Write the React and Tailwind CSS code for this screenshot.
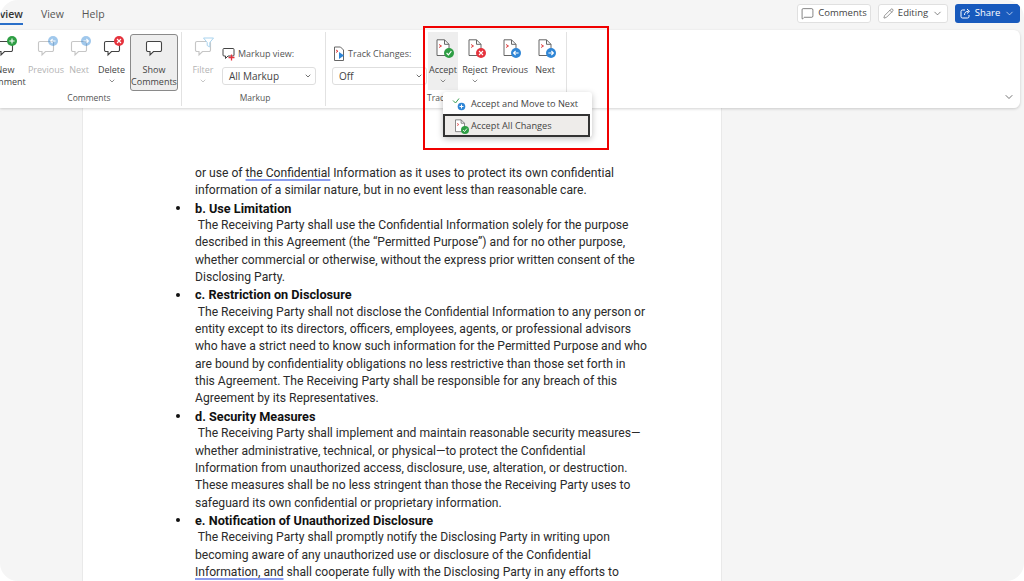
import { ChevronDown, MessageSquare, Pencil } from 'lucide-react';

const BADGES = {
  plus: { bg: 'bg-[#2e9e44]', mark: 'M-2.6 0H2.6M0 -2.6V2.6' },
  cross: { bg: 'bg-[#e5333d]', mark: 'M-2 -2L2 2M2 -2L-2 2' },
  check: { bg: 'bg-[#2e9e44]', mark: 'M-2.4 0L-.6 1.9L2.4 -1.8' },
  left: { bg: 'bg-[#2f86d6]', mark: 'M2.6 0H-2.4M-.4 -2L-2.4 0L-.4 2' },
  right: { bg: 'bg-[#2f86d6]', mark: 'M-2.6 0H2.4M.4 -2L2.4 0L.4 2' },
};

const Badge = ({ type, faded }) => (
  <span className={`absolute -right-[3px] -top-[3px] flex h-[10px] w-[10px] items-center justify-center rounded-full ${BADGES[type].bg} ${faded ? 'opacity-45' : ''}`}>
    <svg width="10" height="10" viewBox="-5 -5 10 10" fill="none">
      <path d={BADGES[type].mark} stroke="#fff" strokeWidth="1.1" />
    </svg>
  </span>
);

const CommentIcon = ({ badge, faded, funnel }) => (
  <span className="relative block h-[18px] w-[18px]">
    <svg width="18" height="18" viewBox="0 0 18 18" fill="none" className={faded ? 'opacity-30' : ''}>
      <path d="M3 2.5h12a1.5 1.5 0 0 1 1.5 1.5v7a1.5 1.5 0 0 1-1.5 1.5H8.5L5 16v-3.5H3A1.5 1.5 0 0 1 1.5 11V4A1.5 1.5 0 0 1 3 2.5Z" stroke="#444" strokeWidth="1.1" fill="#fff" />
    </svg>
    {badge && <Badge type={badge} faded={faded} />}
    {funnel && (
      <svg width="11" height="11" viewBox="0 0 11 11" className="absolute -right-[2px] -top-[2px]">
        <path d="M.5 1h10L6.8 5.5v4.5L4.2 8.5V5.5Z" fill="#fff" stroke="#a9d3ee" strokeWidth="1" />
      </svg>
    )}
  </span>
);

const MarkupIcon = () => (
  <svg width="13" height="14" viewBox="0 0 13 14" fill="none">
    <path d="M2 1.5h9a1 1 0 0 1 1 1v5.5a1 1 0 0 1-1 1H6L3.5 11.5V9H2a1 1 0 0 1-1-1V2.500a1 1 0 0 1 1-1Z" stroke="#444" strokeWidth="1" />
    <path d="M6.500 10.500h6M9.500 7.500v6" stroke="#e5333d" strokeWidth="1.3" />
  </svg>
);

const TrackIcon = () => (
  <svg width="12" height="16" viewBox="0 0 12 16" fill="none">
    <path d="M1.500 1h6L10.500 4v10.500h-9Z" stroke="#666" strokeWidth="1" fill="#fff" />
    <path d="M3 4l2 1.200L3 6.500" stroke="#e0403f" strokeWidth="1" />
    <path d="M6 6l5 3.500-5 3.500Z" fill="#2f86d6" />
  </svg>
);

const DocIcon = ({ badge, small }) => (
  <span className={`relative block ${small ? 'h-[14px] w-[12px]' : 'h-[18px] w-[16px]'}`}>
    <svg width={small ? 12 : 16} height={small ? 14 : 18} viewBox="0 0 16 18" fill="none">
      <path d="M2 .8h7.500L14 5.300v11.200H2Z" stroke="#666" strokeWidth="1" fill="#fff" />
      <path d="M9.500 .8v4.500H14" stroke="#666" strokeWidth="1" />
      <path d="M4 5.500l2.500 1.500L4 8.500" stroke="#e0403f" strokeWidth="1" />
    </svg>
    <span className="absolute -bottom-[1px] -right-[3px]">
      <span className={`flex items-center justify-center rounded-full ${small ? 'h-[8px] w-[8px]' : 'h-[10px] w-[10px]'} ${BADGES[badge].bg}`}>
        <svg width={small ? 8 : 10} height={small ? 8 : 10} viewBox="-5 -5 10 10" fill="none">
          <path d={BADGES[badge].mark} stroke="#fff" strokeWidth="1.1" />
        </svg>
      </span>
    </span>
  </span>
);

const RibbonButton = ({ width, icon, label, chevron, faded, className = '' }) => (
  <div className={`flex shrink-0 flex-col items-center pt-[9px] ${width} ${className}`}>
    {icon}
    <div className={`mt-[7px] text-center text-[9px] leading-[12px] whitespace-pre ${faded ? 'text-[#b4b4b4]' : 'text-[#444]'}`}>{label}</div>
    {chevron && <ChevronDown size={8} strokeWidth={2} className={faded ? 'mt-[1px] text-[#aaa]' : 'mt-[1px] text-[#555]'} />}
  </div>
);

const Select = ({ value, width }) => (
  <div className={`flex h-[18px] items-center justify-between rounded-[3px] border border-[#dedede] bg-white pl-[6px] pr-[3px] text-[10px] text-[#444] ${width}`}>
    <span>{value}</span>
    <ChevronDown size={8} strokeWidth={2.5} className="text-[#555]" />
  </div>
);

const GroupLabel = ({ children, className = '' }) => (
  <div className={`text-center text-[8.5px] leading-[12px] text-[#555] ${className}`}>{children}</div>
);

const Separator = () => <div className="mx-[3px] my-[2px] w-px shrink-0 self-stretch bg-[#e2e2e2]" />;

const Line = ({ children, className = '' }) => <p className={`whitespace-pre ${className}`}>{children}</p>;

const Squiggle = ({ children }) => (
  <span className="underline decoration-[#8c9eef] decoration-2 underline-offset-[2px]">{children}</span>
);

const Heading = ({ children }) => (
  <p className="relative whitespace-pre text-[12.7px] font-bold text-[#111]">
    <span className="absolute -left-[19px] top-[6.5px] h-[4px] w-[4px] rounded-full bg-[#111]" />
    {children}
  </p>
);

export default function App() {
  return (
    <div className="h-[581px] w-[1024px] overflow-hidden bg-white font-['Open_Sans',sans-serif]">
      <div className="relative flex h-full w-full flex-col overflow-hidden rounded-[18px] bg-[#f5f5f5]">

        {/* barra superior */}
        <header className="flex h-[30px] shrink-0 items-start justify-between pr-[4px] pt-[4px]">
          <nav className="flex items-start gap-[18px] pt-[3px] text-[10.5px] leading-[14px] text-[#555]">
            <span className="-ml-[13px] h-[18px] border-b-2 border-[#2a6fc9] font-semibold text-[#333]">Review</span>
            <span>View</span>
            <span>Help</span>
          </nav>
          <div className="flex gap-[7px]">
            <button className="flex h-[19px] w-[74px] items-center justify-center gap-[4px] rounded-[3px] border border-[#e0e0e0] bg-white text-[9.5px] text-[#444]">
              <MessageSquare size={13} strokeWidth={1.2} />
              Comments
            </button>
            <button className="flex h-[19px] w-[70px] items-center justify-center gap-[4px] rounded-[3px] border border-[#e0e0e0] bg-white text-[9.5px] text-[#444]">
              <Pencil size={11} strokeWidth={1.2} />
              Editing
              <ChevronDown size={11} strokeWidth={1.4} />
            </button>
            <button className="flex h-[19px] w-[65px] items-center justify-center gap-[4px] rounded-[3px] bg-[#185abd] text-[9.5px] text-white">
              <svg width="11" height="11" viewBox="0 0 11 11" fill="none" stroke="#fff" strokeWidth="1">
                <path d="M5 2H2.500A1.500 1.500 0 0 0 1 3.500v5A1.500 1.500 0 0 0 2.500 10h5A1.500 1.500 0 0 0 9 8.500V7" />
                <path d="M4.500 7c0-2.500 1.500-3.700 4-3.700M7 1l2.500 2.300L7 5.500" />
              </svg>
              Share
              <ChevronDown size={11} strokeWidth={1.4} />
            </button>
          </div>
        </header>

        {/* cinta */}
        <section className="relative z-10 mr-[4px] flex h-[78px] shrink-0 items-stretch rounded-r-[6px] bg-white shadow-[0_1px_3px_rgba(0,0,0,0.18)]">
          {/* Comments */}
          <div className="-ml-[20px] flex shrink-0 flex-col">
            <div className="flex h-[63px]">
              <RibbonButton width="w-[50px]" icon={<CommentIcon badge="plus" />} label={'New\nComment'} />
              <RibbonButton width="w-[34px]" className="ml-[-1px]" icon={<CommentIcon badge="left" faded />} label="Previous" faded />
              <RibbonButton width="w-[32px]" icon={<CommentIcon badge="right" faded />} label="Next" faded />
              <RibbonButton width="w-[33px]" icon={<CommentIcon badge="cross" />} label="Delete" chevron />
              <div className="ml-[2px] mt-[4px] h-[57px] w-[48px] rounded-[3px] border border-[#8a8a8a] bg-[#eeeeee]">
                <RibbonButton width="w-full" className="!pt-[4px]" icon={<CommentIcon />} label={'Show\nComments'} />
              </div>
            </div>
            <GroupLabel className="mt-[-1px] pl-[20px]">Comments</GroupLabel>
          </div>
          <Separator />

          {/* Markup */}
          <div className="ml-[3px] flex w-[134px] shrink-0 flex-col">
            <div className="flex h-[63px]">
              <RibbonButton width="w-[30px]" icon={<CommentIcon faded funnel />} label="Filter" chevron faded />
              <div className="ml-[4px] flex flex-col pt-[15px]">
                <div className="mb-[5px] flex h-[17px] items-center gap-[3px] text-[9px] text-[#555]">
                  <MarkupIcon />
                  Markup view:
                </div>
                <Select value="All Markup" width="w-[94px]" />
              </div>
            </div>
            <GroupLabel className="mt-[-1px]">Markup</GroupLabel>
          </div>
          <Separator />

          {/* Tracking */}
          <div className="ml-[3px] flex shrink-0 flex-col">
            <div className="flex h-[63px]">
              <div className="flex flex-col pt-[15px]">
                <div className="mb-[5px] flex h-[17px] items-center gap-[3px] pl-[1px] text-[9px] text-[#555]">
                  <TrackIcon />
                  Track Changes:
                </div>
                <Select value="Off" width="w-[95px]" />
              </div>
              <div className="ml-px mt-[2px] h-[58px] w-[30px] bg-[#eeeeee]">
                <RibbonButton width="w-full" className="!pt-[7px]" icon={<DocIcon badge="check" />} label="Accept" chevron />
              </div>
              <RibbonButton width="w-[32px]" className="ml-[1px]" icon={<DocIcon badge="cross" />} label="Reject" chevron />
              <RibbonButton width="w-[38px]" icon={<DocIcon badge="left" />} label="Previous" />
              <RibbonButton width="w-[32px]" icon={<DocIcon badge="right" />} label="Next" />
            </div>
            <GroupLabel className="mt-[-1px] pl-[95px] text-left">Tracking</GroupLabel>
          </div>
          <div className="mx-[5px] my-[2px] w-px shrink-0 bg-[#e2e2e2]" />
          <ChevronDown size={12} strokeWidth={1.5} className="absolute bottom-[5px] right-[5px] text-[#444]" />

          {/* menu desplegado */}
          <div className="absolute left-[443px] top-[62px] z-20 w-[149px] rounded-[3px] bg-white pt-[2px] shadow-[0_2px_6px_rgba(0,0,0,0.25)]">
            <div className="flex h-[19px] items-center gap-[5px] pl-[9px] text-[9.2px] text-[#444]">
              <svg width="14" height="14" viewBox="0 0 14 14" fill="none">
                <path d="M1 3.500L3.500 6L7 1.500" stroke="#3a9e50" strokeWidth="1" />
                <circle cx="9.500" cy="9.500" r="3.800" fill="#2f86d6" />
                <path d="M7.500 9.500h4M9.500 7.500v4" stroke="#fff" strokeWidth="1" />
              </svg>
              Accept and Move to Next
            </div>
            <div className="mt-[1px] flex h-[23px] w-[147px] items-center gap-[5px] border-2 border-[#333] bg-[#eeecea] pl-[9px] text-[9.2px] text-[#444]">
              <DocIcon badge="check" small />
              Accept All Changes
            </div>
          </div>
        </section>

        {/* documento */}
        <main className="min-h-0 flex-1 overflow-hidden">
          <article className="ml-[82px] h-full w-[640px] border-x border-[#e9e9e9] bg-white pl-[112px] pt-[57px] text-[12.14px] leading-[17.35px] text-[#2b2b2b] font-['Roboto',sans-serif]">
            <Line>or use of <Squiggle>the Confidential</Squiggle> Information as it uses to protect its own confidential</Line>
            <Line>information of a similar nature, but in no event less than reasonable care.</Line>
            <Heading>b. Use Limitation</Heading>
            <Line> The Receiving Party shall use the Confidential Information solely for the purpose</Line>
            <Line>described in this Agreement (the “Permitted Purpose”) and for no other purpose,</Line>
            <Line>whether commercial or otherwise, without the express prior written consent of the</Line>
            <Line>Disclosing Party.</Line>
            <Heading>c. Restriction on Disclosure</Heading>
            <Line> The Receiving Party shall not disclose the Confidential Information to any person or</Line>
            <Line>entity except to its directors, officers, employees, agents, or professional advisors</Line>
            <Line>who have a strict need to know such information for the Permitted Purpose and who</Line>
            <Line>are bound by confidentiality obligations no less restrictive than those set forth in</Line>
            <Line>this Agreement. The Receiving Party shall be responsible for any breach of this</Line>
            <Line>Agreement by its Representatives.</Line>
            <Heading>d. Security Measures</Heading>
            <Line> The Receiving Party shall implement and maintain reasonable security measures—</Line>
            <Line>whether administrative, technical, or physical—to protect the Confidential</Line>
            <Line>Information from unauthorized access, disclosure, use, alteration, or destruction.</Line>
            <Line>These measures shall be no less stringent than those the Receiving Party uses to</Line>
            <Line>safeguard its own confidential or proprietary information.</Line>
            <Heading>e. Notification of Unauthorized Disclosure</Heading>
            <Line> The Receiving Party shall promptly notify the Disclosing Party in writing upon</Line>
            <Line>becoming aware of any unauthorized use or disclosure of the Confidential</Line>
            <Line><Squiggle>Information, and</Squiggle> shall cooperate fully with the Disclosing Party in any efforts to</Line>
          </article>
        </main>

        {/* recuadro rojo */}
        <div className="pointer-events-none absolute left-[423px] top-[26px] z-30 h-[124px] w-[186px] border-2 border-[#f00000]" />
      </div>
    </div>
  );
}
